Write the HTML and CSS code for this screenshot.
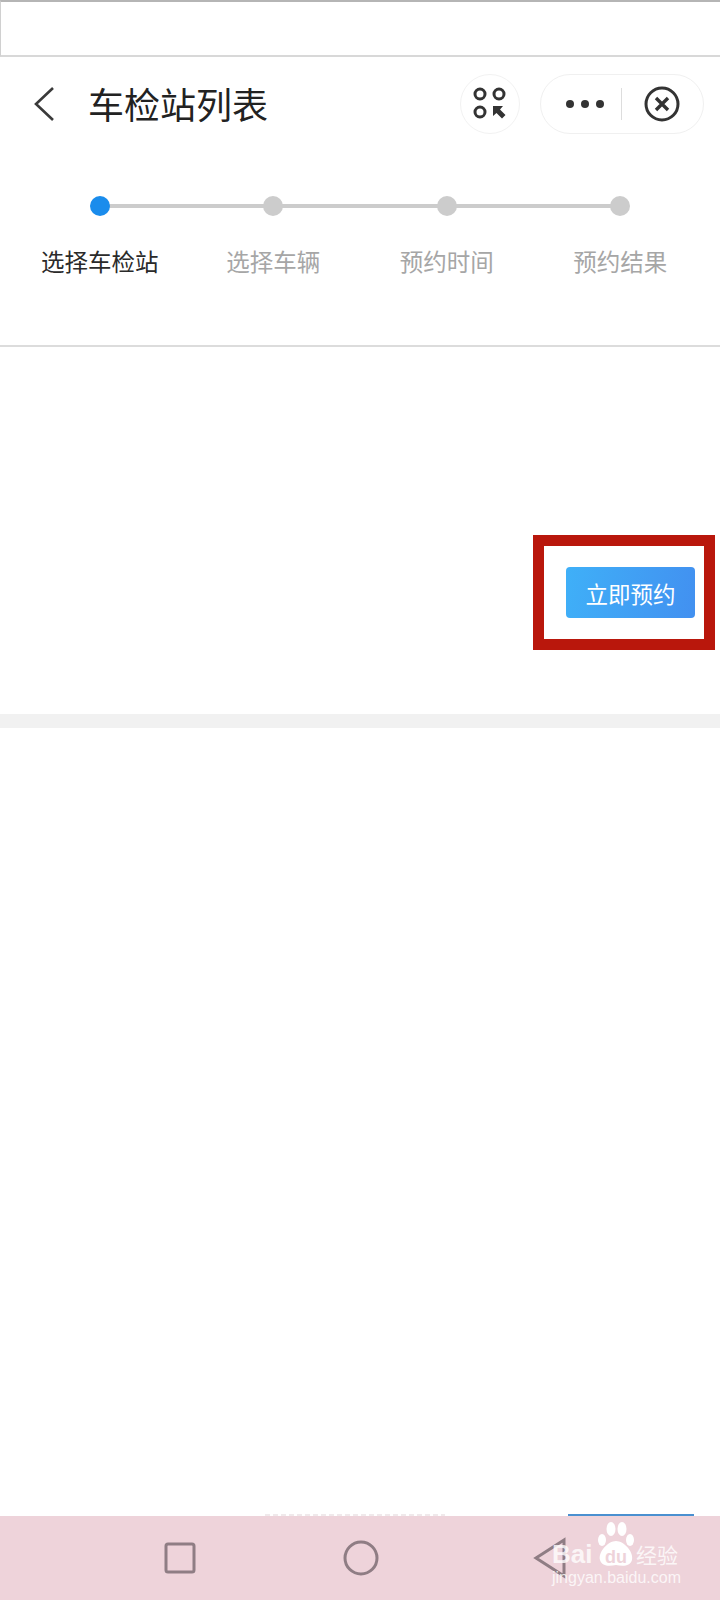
FILE: index.html
```html
<!DOCTYPE html>
<html lang="zh-CN">
<head>
    <meta charset="UTF-8">
    <meta name="viewport" content="width=device-width, initial-scale=1.0">
    <title>车检站列表</title>
    <link rel="stylesheet" href="styles.css">
</head>
<body>
    <div class="page">
        <div class="top-bar"></div>

        <div class="header">
            <svg class="back-icon" width="22" height="36" viewBox="0 0 22 36">
                <path d="M20 2 L3 18 L20 34" fill="none" stroke="#3a3a3a" stroke-width="2.6"/>
            </svg>
            <h1 class="title">车检站列表</h1>
            <div class="round-btn">
                <svg width="36" height="36" viewBox="0 0 36 36">
                    <circle cx="8" cy="8" r="5" fill="none" stroke="#333" stroke-width="3"/>
                    <circle cx="27" cy="8" r="5" fill="none" stroke="#333" stroke-width="3"/>
                    <circle cx="8" cy="26" r="5" fill="none" stroke="#333" stroke-width="3"/>
                    <path d="M21 20 H31 L28 23.5 L33.5 29 L30 32.5 L24.5 27 L21 30 Z" fill="#333"/>
                </svg>
            </div>
            <div class="capsule">
                <div class="more-dots"><span></span><span></span><span></span></div>
                <div class="capsule-line"></div>
                <svg width="36" height="36" viewBox="0 0 36 36">
                    <circle cx="18" cy="18" r="16" fill="none" stroke="#333" stroke-width="3"/>
                    <path d="M12 12 L24 24 M24 12 L12 24" fill="none" stroke="#333" stroke-width="3.4"/>
                </svg>
            </div>
        </div>

        <div class="steps">
            <div class="step active"><div class="dot"></div><p>选择车检站</p></div>
            <div class="step"><div class="dot"></div><p>选择车辆</p></div>
            <div class="step"><div class="dot"></div><p>预约时间</p></div>
            <div class="step"><div class="dot"></div><p>预约结果</p></div>
        </div>

        <div class="station">
            <div class="red-box">
                <button class="book-btn">立即预约</button>
            </div>
        </div>
        <div class="band"></div>

        <div class="station-next">
            <div class="next-text-edge"></div>
            <div class="next-btn-edge"></div>
        </div>

        <div class="nav-bar">
            <svg class="nav-square" width="32" height="32" viewBox="0 0 32 32">
                <rect x="2" y="2" width="28" height="28" rx="2" fill="none" stroke="#8f7d84" stroke-width="3"/>
            </svg>
            <svg class="nav-circle" width="36" height="36" viewBox="0 0 36 36">
                <circle cx="18" cy="18" r="16" fill="none" stroke="#8f7d84" stroke-width="3"/>
            </svg>
            <svg class="nav-back" width="34" height="42" viewBox="0 0 34 42">
                <path d="M31 3 L3 21 L31 39 Z" fill="none" stroke="#8f7d84" stroke-width="3"/>
            </svg>

            <!-- watermark -->
            <div class="watermark">
                <div class="mark-row">
                    <span class="mark-bai">Bai</span>
                    <span class="mark-du">
                        <svg class="paw" width="40" height="46" viewBox="0 0 40 46">
                            <ellipse cx="6" cy="18" rx="4" ry="6" fill="#fff"/>
                            <ellipse cx="15" cy="7" rx="4.5" ry="7" fill="#fff"/>
                            <ellipse cx="26" cy="7" rx="4.5" ry="7" fill="#fff"/>
                            <ellipse cx="34" cy="18" rx="4" ry="6" fill="#fff"/>
                            <path d="M20 19 C28 19 38 30 36 38 C34 45 26 44 20 43 C14 44 6 45 4 38 C2 30 12 19 20 19 Z" fill="#fff"/>
                        </svg>
                        <span class="du-text">du</span>
                    </span>
                    <span class="mark-cn">经验</span>
                </div>
                <div class="mark-url">jingyan.baidu.com</div>
            </div>
        </div>
    </div>
</body>
</html>
```

FILE: styles.css
```css
body {
    margin: 0;
    background: #fff;
    font-family: "Noto Sans CJK SC", "Liberation Sans", sans-serif;
}

.page {
    width: 720px;
    height: 1600px;
    display: flex;
    flex-direction: column;
    overflow: hidden;
}

.top-bar {
    height: 53px;
    flex-shrink: 0;
    border-top: 2px solid #b5b5b5;
    border-bottom: 2px solid #d8d8d8;
    border-left: 1px solid #d0d0d0;
}

/* Header */
.header {
    height: 94px;
    flex-shrink: 0;
    display: flex;
    align-items: center;
    padding-left: 33px;
}

.back-icon {
    margin-right: 33px;
}

.title {
    margin: 0 0 3px;
    flex: 1;
    font-size: 36px;
    font-weight: 400;
    color: #222;
}

.round-btn {
    width: 58px;
    height: 58px;
    border: 1px solid #f2f2f2;
    border-radius: 50%;
    display: flex;
    align-items: center;
    justify-content: center;
    margin-right: 20px;
}

.capsule {
    width: 137px;
    height: 58px;
    border: 1px solid #f0f0f0;
    border-radius: 30px;
    display: flex;
    align-items: center;
    margin-right: 16px;
    padding-left: 25px;
}

.more-dots {
    display: flex;
    gap: 7px;
}

.more-dots span {
    width: 8px;
    height: 8px;
    border-radius: 50%;
    background: #333;
}

.capsule-line {
    width: 1px;
    height: 32px;
    background: #ddd;
    margin: 0 22px 0 17px;
}

/* Steps */
.steps {
    display: grid;
    grid-template-columns: repeat(4, 173.5px);
    padding: 45px 0 0 13px;
    height: 149px;
    flex-shrink: 0;
    border-bottom: 2px solid #dcdcdc;
}

.step {
    position: relative;
    text-align: center;
}

.step::before {
    content: "";
    position: absolute;
    top: 8px;
    left: 50%;
    width: 100%;
    height: 4px;
    background: #ccc;
}

.step:last-child::before {
    display: none;
}

.dot {
    position: relative;
    width: 20px;
    height: 20px;
    margin: 0 auto;
    border-radius: 50%;
    background: #ccc;
}

.step.active .dot {
    background: #1a8cec;
}

.step p {
    margin: 28px 0 0;
    font-size: 23.5px;
    line-height: 34px;
    color: #a6a6a6;
}

.step.active p {
    color: #2a2a2a;
}

/* Station card */
.station {
    height: 367px;
    flex-shrink: 0;
    padding: 188px 5px 0 0;
    box-sizing: border-box;
    display: flex;
    justify-content: flex-end;
    align-items: flex-start;
}

.red-box {
    width: 138px;
    height: 93px;
    border: 11px solid #b9170c;
    display: flex;
    align-items: center;
    padding-left: 22px;
}

.book-btn {
    width: 129px;
    height: 51px;
    padding: 0;
    border: none;
    border-radius: 4px;
    background: linear-gradient(100deg, #3fb0f8, #4290f0);
    color: #fff;
    font-family: inherit;
    font-size: 22.5px;
}

.band {
    height: 14px;
    flex-shrink: 0;
    background: #f1f1f1;
}

.station-next {
    flex: 1;
    display: flex;
    align-items: flex-end;
    padding-left: 265px;
}

.next-text-edge {
    width: 180px;
    height: 2px;
    margin-right: 123px;
    background: repeating-linear-gradient(90deg, #f0e9eb 0 5px, #fff 5px 8px);
}

.next-btn-edge {
    width: 126px;
    height: 2px;
    background: #4a90d0;
}

/* Bottom nav */
.nav-bar {
    position: relative;
    height: 84px;
    flex-shrink: 0;
    display: flex;
    align-items: center;
    background: #eed3da;
    padding-left: 164px;
}

.nav-circle {
    margin-left: 147px;
}

.nav-back {
    margin-left: 154px;
}

.watermark {
    position: absolute;
    left: 552px;
    top: 6px;
    width: 130px;
    color: rgba(255,255,255,0.8);
}

.mark-row {
    display: flex;
    align-items: flex-end;
    height: 46px;
    font-family: "Liberation Sans", sans-serif;
}

.mark-bai {
    font-size: 26px;
    font-weight: 700;
    line-height: 28px;
    width: 44px;
}

.mark-du {
    position: relative;
    width: 40px;
    height: 46px;
}

.paw {
    display: block;
}

.du-text {
    position: absolute;
    left: 9px;
    bottom: 2px;
    font-size: 18px;
    font-weight: 700;
    line-height: 18px;
    color: #eed3da;
}

.mark-cn {
    font-family: "Noto Sans CJK SC", sans-serif;
    font-size: 21px;
    line-height: 28px;
    white-space: nowrap;
}

.mark-url {
    margin-top: 1px;
    font-family: "Liberation Sans", sans-serif;
    font-size: 16px;
    line-height: 18px;
    white-space: nowrap;
}
```
